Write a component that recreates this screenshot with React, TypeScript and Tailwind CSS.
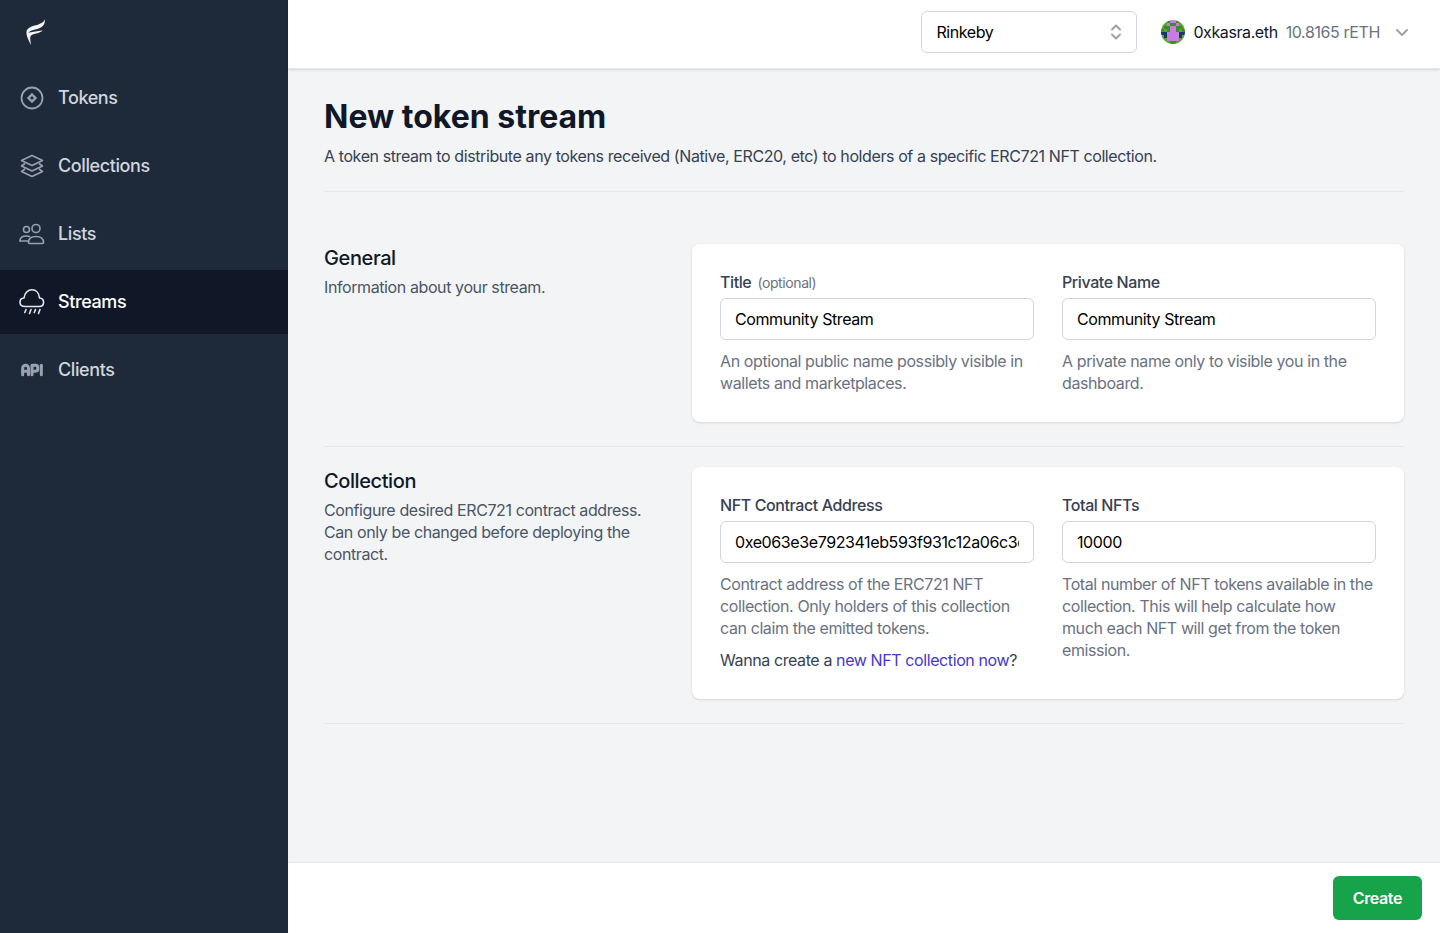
import { TbApi } from "react-icons/tb";

function LogoMark() {
  return (
    <svg viewBox="0 0 21 29" className="h-7 w-5" fill="#f3f4f6">
      <path d="M20 1C19 4 15 6 10 7.500 5 9 1 10.500.5 14.500 0 18 3 24 5.500 28.500 4.500 24 4 20 5 18.500 6.500 16.500 10 16.500 13 15.500 15 14.800 16.500 14 17.500 13 14 13.500 9 14 5 14.800 3.800 15 3 15.200 2.500 15.600 3.500 13 7 12.500 11 11.500 16 10.200 20 8 20 1z" />
    </svg>
  );
}

function TokensIcon() {
  return (
    <svg viewBox="0 0 24 24" className="h-6 w-6" fill="none" stroke="currentColor" strokeWidth="1.800">
      <circle cx="12" cy="12" r="10.500" />
      <path d="M12 8.500l3.500 3.500-3.500 3.500-3.500-3.500z" strokeWidth="2.400" />
    </svg>
  );
}

function CollectionsIcon() {
  return (
    <svg viewBox="0 0 24 24" className="h-6 w-6" fill="none" stroke="currentColor" strokeWidth="1.600" strokeLinejoin="round">
      <path d="M12 1.500l10.500 5-10.500 5-10.500-5z" />
      <path d="M5 9.500l-3.500 2.500 10.500 5 10.500-5L19 9.500" />
      <path d="M5 15l-3.500 2.500 10.500 5 10.500-5L19 15" />
    </svg>
  );
}

function ListsIcon() {
  return (
    <svg viewBox="0 0 26 24" className="-ml-0.5 h-6 w-7" fill="none" stroke="currentColor" strokeWidth="1.600">
      <circle cx="7.500" cy="7.500" r="3" />
      <circle cx="17" cy="6.500" r="4" />
      <path d="M1 19c0-3.500 2.500-5 6.500-5 1 0 2 .1 3 .4" strokeLinecap="round" />
      <path d="M1 19h8" strokeLinecap="round" />
      <path d="M9.500 20.500c0-4 3-6 7.500-6s7.500 2 7.500 6c0 .5-.3 1-1 1h-13c-.7 0-1-.5-1-1z" />
    </svg>
  );
}

function StreamsIcon() {
  return (
    <svg viewBox="-1 -1 28 28" className="-my-0.5 -ml-0.5 h-7 w-7" fill="none" stroke="currentColor" strokeWidth="1.600" strokeLinecap="round" strokeLinejoin="round">
      <path d="M6 17.500C-.5 17.500-.5 9.500 5 9 5.500 4 9 .8 13 .8 17 .8 20 4 20.500 9 26 9.500 26 17.500 20 17.500z" />
      <path d="M7 20.500l-1.200 3M12 20.500l-1.500 4M16.500 20.500l-1.200 3M21 20.500l-1.500 4" />
    </svg>
  );
}

function Avatar() {
  // 8x8 identicon cells, 0 green, 1 pink, 2 navy, 3 dark green
  const cells = [
    [0, 0, 3, 1, 1, 3, 0, 0],
    [0, 0, 1, 3, 3, 1, 0, 0],
    [0, 3, 3, 1, 1, 3, 3, 0],
    [3, 0, 3, 1, 1, 3, 0, 3],
    [2, 2, 1, 1, 1, 1, 2, 2],
    [0, 2, 1, 1, 1, 1, 2, 0],
    [0, 0, 1, 1, 1, 1, 0, 0],
    [0, 0, 0, 3, 3, 0, 0, 0],
  ];
  const colors = ["#5aa52f", "#c77ddb", "#123a63", "#3f8a2e"];
  return (
    <svg viewBox="0 0 8 8" className="h-6 w-6 rounded-full" shapeRendering="crispEdges">
      {cells.map((row, y) =>
        row.map((c, x) => <rect key={`${x}-${y}`} x={x} y={y} width="1" height="1" fill={colors[c]} />),
      )}
    </svg>
  );
}

const navItems = [
  { label: "Tokens", icon: <TokensIcon /> },
  { label: "Collections", icon: <CollectionsIcon /> },
  { label: "Lists", icon: <ListsIcon /> },
  { label: "Streams", icon: <StreamsIcon />, active: true },
  { label: "Clients", icon: <TbApi className="-my-0.5 -ml-0.5 h-7 w-7" strokeWidth={2.6} /> },
];

function Field({
  label,
  optional,
  value,
  children,
}: {
  label: string;
  optional?: boolean;
  value: string;
  children: React.ReactNode;
}) {
  return (
    <div>
      <div className="mb-1.5 h-5 text-base leading-5 font-medium text-gray-700">
        {label}
        {optional && <span className="ml-1.5 text-sm leading-none font-normal text-gray-500">(optional)</span>}
      </div>
      <input
        readOnly
        value={value}
        className="w-full rounded-md border border-gray-300 bg-white px-3.5 py-2 text-base leading-6 tracking-tight text-black outline-none"
      />
      <div className="mt-2.5 text-base leading-snug text-gray-500">{children}</div>
    </div>
  );
}

export default function App() {
  return (
    <div className="flex h-screen overflow-hidden bg-gray-100 font-['Inter','Liberation_Sans',sans-serif] tracking-tight">
      <aside className="flex w-72 flex-col bg-gray-800">
        <div className="flex h-16 items-center px-6.5">
          <LogoMark />
        </div>
        <nav className="mt-0.5 flex flex-col gap-1">
          {navItems.map((item) => (
            <div
              key={item.label}
              className={
                item.active
                  ? "flex items-center bg-gray-900 py-5 pl-5 text-lg leading-6 font-medium text-white"
                  : "flex items-center py-5 pl-5 text-lg leading-6 font-medium text-gray-300"
              }
            >
              <span className={item.active ? "flex w-[38px] text-gray-200" : "flex w-[38px] text-gray-400"}>
                {item.icon}
              </span>
              {item.label}
            </div>
          ))}
        </nav>
      </aside>

      <div className="flex flex-1 flex-col">
        <header className="flex h-[69px] items-center justify-end gap-6 border-b border-gray-200 bg-white pr-7.5 pb-1 shadow-sm">
          <div className="flex h-[42px] w-54 items-center justify-between rounded-md border border-gray-300 pr-3 pl-3.5 text-base text-black">
            Rinkeby
            <svg viewBox="0 0 16 24" className="h-6 w-4 text-gray-400" fill="none" stroke="currentColor" strokeWidth="2" strokeLinecap="round" strokeLinejoin="round">
              <path d="M4 9.500l4-4 4 4M4 14.500l4 4 4-4" />
            </svg>
          </div>
          <div className="flex items-center text-base">
            <Avatar />
            <span className="ml-2 text-gray-900">0xkasra.eth</span>
            <span className="ml-2 text-gray-500">10.8165 rETH</span>
            <svg viewBox="0 0 16 16" className="ml-3.5 h-4 w-4 text-gray-400" fill="none" stroke="currentColor" strokeWidth="2" strokeLinecap="round" strokeLinejoin="round">
              <path d="M3 6l5 5 5-5" />
            </svg>
          </div>
        </header>

        <main className="flex-1 px-9 pt-7">
          <h1 className="text-[32px] leading-10 font-bold tracking-normal text-gray-900">New token stream</h1>
          <p className="mt-2 border-b border-gray-200 pb-6 text-base leading-snug text-gray-700">
            A token stream to distribute any tokens received (Native, ERC20, etc) to holders of a specific ERC721 NFT collection.
          </p>

          <section className="mt-7 grid grid-cols-3 gap-6 border-b border-gray-200 py-6">
            <div>
              <h2 className="text-xl leading-7 font-medium text-gray-900">General</h2>
              <p className="mt-1 text-base leading-snug text-gray-600">Information about your stream.</p>
            </div>
            <div className="col-span-2 grid grid-cols-2 gap-7 rounded-lg bg-white p-7 shadow">
              <Field label="Title" optional value="Community Stream">
                An optional public name possibly visible in wallets and marketplaces.
              </Field>
              <Field label="Private Name" value="Community Stream">
                A private name only to visible you in the dashboard.
              </Field>
            </div>
          </section>

          <section className="grid grid-cols-3 gap-6 border-b border-gray-200 pt-5 pb-6">
            <div>
              <h2 className="text-xl leading-7 font-medium text-gray-900">Collection</h2>
              <p className="mt-1 text-base leading-snug text-gray-600">
                Configure desired ERC721 contract address. Can only be changed before deploying the contract.
              </p>
            </div>
            <div className="col-span-2 grid grid-cols-2 gap-7 rounded-lg bg-white p-7 shadow">
              <Field label="NFT Contract Address" value="0xe063e3e792341eb593f931c12a06c3e1b7a90c5f">
                Contract address of the ERC721 NFT collection. Only holders of this collection can claim the emitted tokens.
                <div className="mt-2.5 text-gray-700">
                  Wanna create a <span className="text-[#4338ca]">new NFT collection now</span>?
                </div>
              </Field>
              <Field label="Total NFTs" value="10000">
                Total number of NFT tokens available in the collection. This will help calculate how much each NFT will get from the token emission.
              </Field>
            </div>
          </section>
        </main>

        <footer className="flex h-[71px] items-center justify-end border-t border-gray-200 bg-white pr-4.5">
          <button type="button" className="rounded-md bg-[#16a34a] px-5 py-2.5 text-base font-semibold text-white">
            Create
          </button>
        </footer>
      </div>
    </div>
  );
}
